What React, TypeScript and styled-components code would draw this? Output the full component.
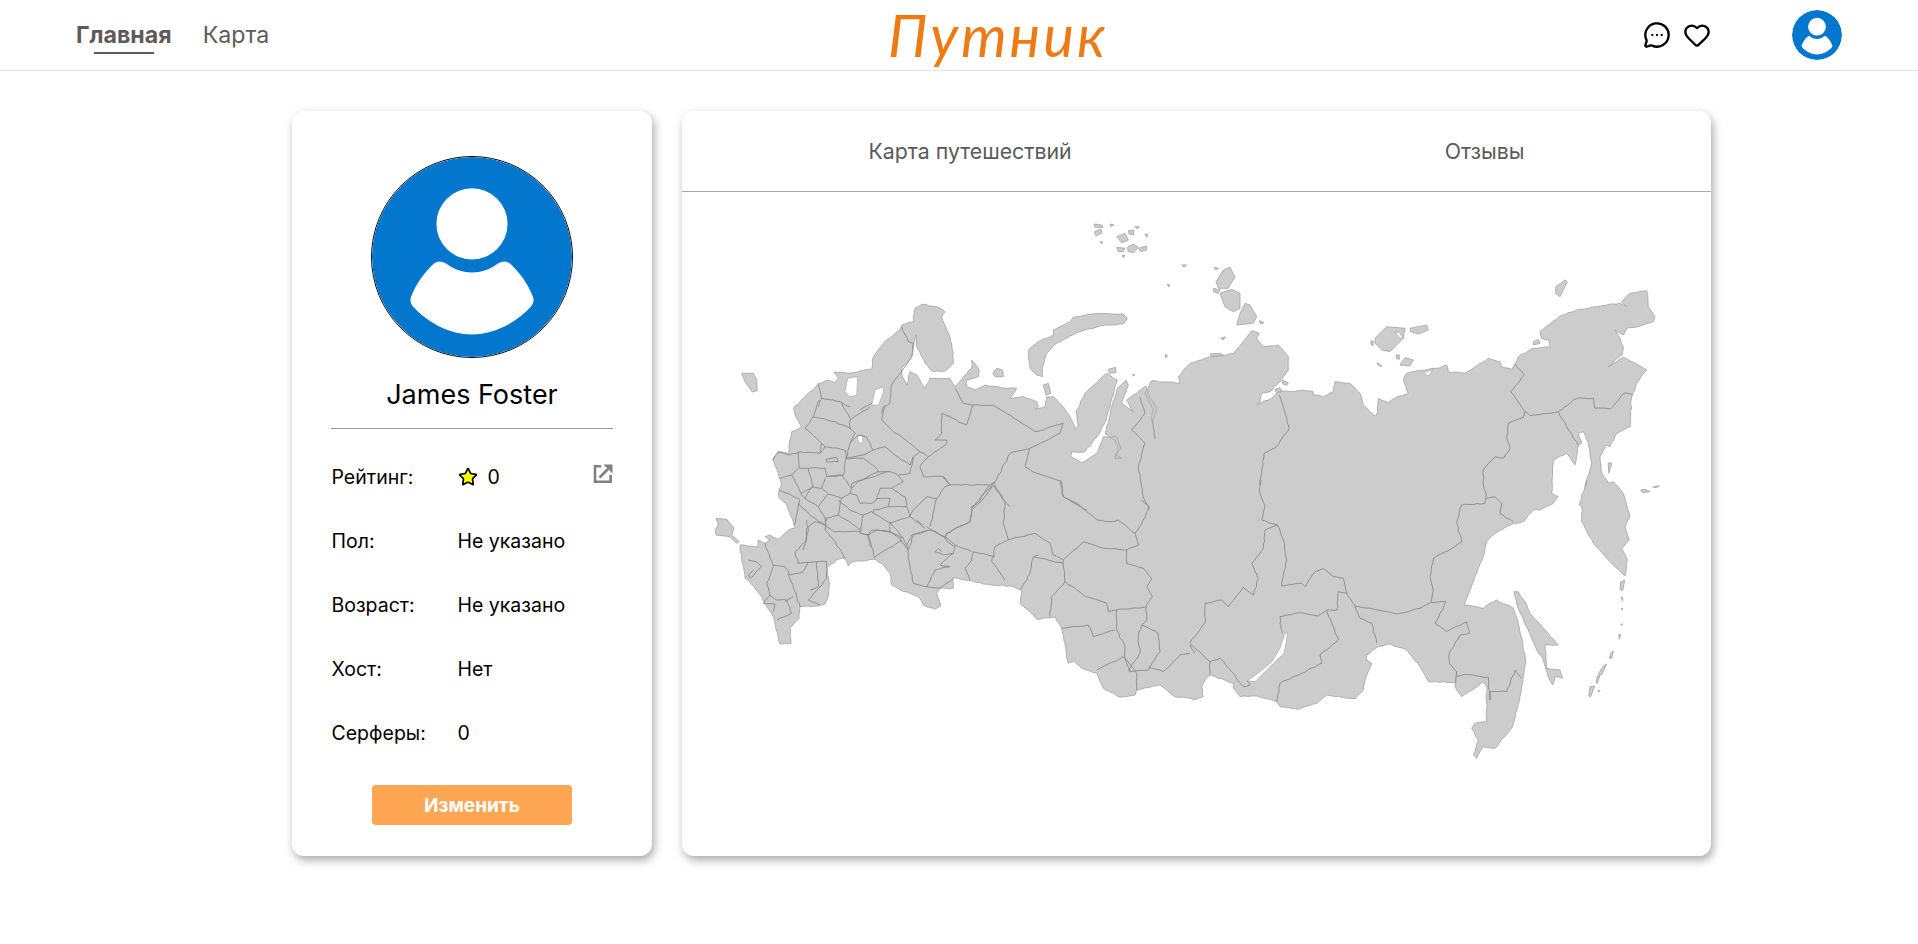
import React from 'react';
import styled, { createGlobalStyle } from 'styled-components';
import { Heart, MessageCircleMore, Star } from 'lucide-react';

// map data is traced in 3x crop coordinates, each helper maps one crop back to page pixels
const crop = (ox: number, oy: number) => (s: string) =>
  s
    .trim()
    .split(/\s+/)
    .map((p) => {
      const [x, y] = p.split(',').map(Number);
      return `${(ox + x / 3).toFixed(1)},${(oy + y / 3).toFixed(1)}`;
    })
    .join(' ');

const nw = crop(690, 210);
const sw = crop(690, 480);
const ne = crop(1190, 210);
const se = crop(1190, 480);
const eu = crop(770, 400);

// splits long segments and shakes the new points a little so the lines look like real borders
const roughen = (pts: string, amp: number, closed = false) => {
  const list = pts.split(' ').map((p) => p.split(',').map(Number));
  const out: string[] = [];
  let seed = 1;
  const noise = () => {
    seed += 1;
    const v = Math.sin(seed * 12.9898) * 43758.5453;
    return (v - Math.floor(v) - 0.5) * 2 * amp;
  };
  const count = closed ? list.length : list.length - 1;
  for (let i = 0; i < count; i++) {
    const [x1, y1] = list[i];
    const [x2, y2] = list[(i + 1) % list.length];
    const n = Math.max(1, Math.round(Math.hypot(x2 - x1, y2 - y1) / 4));
    out.push(`${x1},${y1}`);
    for (let k = 1; k < n; k++) {
      const t = k / n;
      out.push(`${(x1 + (x2 - x1) * t + noise()).toFixed(1)},${(y1 + (y2 - y1) * t + noise()).toFixed(1)}`);
    }
  }
  if (!closed) out.push(list[list.length - 1].join(','));
  return out.join(' ');
};

const mainland = roughen(
  [
    nw(`248,750 265,725 295,730 297,705 305,665 335,652 320,625 310,595 340,565 360,545 385,522 410,510 435,518 445,505 432,487
    475,490 545,478 550,440 580,400 630,360 635,345 670,335 675,295 695,283 740,290 765,305 755,320 780,380 790,430 790,460
    765,483 730,485 705,460 680,410 678,375 672,400 665,440 635,475 635,490 650,525 660,485 680,495 690,510 705,535 720,505
    780,505 795,530 820,500 845,475 845,450 868,480 865,500 830,510 830,530 855,540 885,525 950,535 980,535 960,565 1000,560
    1040,575 1045,590 1036,598 1065,590 1070,560 1090,560 1120,590 1150,640 1155,660 1165,645 1158,605 1185,550 1250,490
    1282,510 1265,565 1250,625 1225,675 1185,725 1145,725 1142,740 1175,758 1222,728 1240,680 1280,680 1292,715 1278,735
    1295,745 1275,745 1285,710 1275,690 1245,672 1262,600 1280,540 1308,510 1315,525 1295,580 1330,605 1310,570 1345,545
    1368,528 1375,555 1400,595 1388,640 1395,688 1385,620 1390,600 1365,550 1385,512 1470,520 1465,500 1480,480 1500,460`),
    ne(`60,440 100,435 130,430 155,400 185,362 208,370 200,385 220,410 265,405 295,440 295,480 270,515 240,545 215,550 210,575
    200,585 245,565 270,540 305,545 340,540 370,545 370,555 400,560 430,545 435,515 480,520 510,550 520,585 555,618 560,615
    565,565 595,578 620,560 655,550 640,510 650,490 725,475 740,475 770,465 775,485 825,490 895,445 930,455 935,470 965,478
    975,462 985,440 1030,415 1080,410 1075,390 1055,385 1050,365 1110,318 1160,300 1250,285 1290,280 1310,290 1295,275
    1320,250 1370,242 1375,290 1395,320 1390,335 1345,350 1310,355 1300,375 1275,360 1290,385 1300,410 1295,435 1255,470
    1300,442 1340,462 1370,480 1340,520 1325,560 1320,650 1280,670 1260,710 1250,705 1230,740 1235,790 1255,820 1270,815
    1300,850`),
    se(`1300,40 1320,110 1305,140 1318,180 1295,205 1312,240 1305,288 1260,245 1210,190 1175,125 1175,80 1168,75 1190,0`),
    ne(`1185,830 1205,760 1195,700 1180,665 1165,670 1175,700 1165,705 1155,765 1130,730 1090,750 1085,850`),
    se(`1105,50 1090,70 1050,90 1030,90 1000,125 960,135 915,160 890,185 880,230 855,290 822,375 860,380 880,385 900,370 920,360
    970,385 985,430 1008,545 990,650 965,745 915,805 880,800 860,835 850,825 865,780 845,745 855,730 890,725 890,620 880,605
    815,650 795,620 795,607 715,605 690,560 650,510 600,492 565,500 530,525 530,540 545,550 525,600 520,630 495,657 410,645
    380,670 325,688 270,680 260,665 200,648 150,650 130,625 130,610 60,585 45,600 35,620 40,650 15,660`),
    sw(`1500,655 1455,650 1410,615 1340,630 1335,645 1290,652 1240,625 1220,580 1180,567 1150,543 1135,550 1115,445 1095,410
    1040,418 1020,395 990,370 995,330 960,318 880,312 790,292 790,325 750,325 740,340 752,378 735,388 700,375 685,350 660,340
    630,330 605,315 600,280 580,255 555,238 490,245 475,258 465,235 440,240 412,262 418,310 415,350 405,372 385,378 330,380
    328,415 300,445 303,490 270,492 255,430 250,410 225,370 215,350 175,300 165,295 150,200 150,195 205,200 205,180 225,190
    240,180 225,170 240,165 265,178 295,150 315,145 308,120 290,75 268,55 265,40 275,15`),
    nw(`270,810 265,790`),
  ].join(' '),
  0.55,
  true,
);

const islands = [
  nw('155,490 190,490 200,510 202,542 187,546 165,515'),
  sw('78,115 110,118 132,145 125,165 148,185 140,190 120,170 78,165 75,150 85,135'),
  roughen(
    nw(`1015,420 1045,395 1090,375 1090,360 1140,335 1150,322 1225,310 1300,312 1312,325 1300,342 1230,348 1170,365 1100,400
    1070,430 1058,470 1058,500 1040,495 1020,475 1015,440`),
    0.5,
    true,
  ),
  nw('908,490 920,475 938,480 940,500 915,500'),
  nw('1060,525 1075,520 1082,550 1068,555'),
  nw('1255,478 1277,472 1278,488 1258,490'),
  nw('1213,42 1235,45 1240,52 1215,52'),
  nw('1213,65 1232,57 1236,68 1218,78'),
  nw('1280,80 1305,70 1315,90 1295,98'),
  nw('1312,112 1330,102 1345,112 1330,128 1315,125'),
  nw('1345,115 1370,108 1370,120 1352,125'),
  nw('1280,112 1305,115 1300,125 1285,125'),
  nw('1315,62 1332,60 1330,75 1318,72'),
  nw('1230,95 1238,95 1236,102'),
  nw('1260,42 1272,45 1262,50'),
  nw('1335,50 1348,50 1342,57'),
  nw('1365,72 1374,74 1370,82'),
  nw('1297,135 1305,136 1300,143'),
  nw('1475,165 1490,165 1482,171'),
  nw('1432,222 1440,226 1436,231'),
  nw('1427,432 1433,438 1426,444'),
  nw('1328,493 1335,495 1330,498'),
  ne('100,180 120,172 135,200 115,235 85,235 78,215'),
  ne('70,235 90,240 85,250 72,246'),
  ne('90,250 125,238 150,250 150,295 130,305 105,290'),
  ne('165,280 180,285 200,320 190,340 140,345 150,310'),
  ne('72,172 86,175 78,180'),
  ne('208,332 222,338 212,342'),
  ne('92,385 106,380 100,390'),
  ne('60,432 90,430 100,436 65,440'),
  ne('555,385 590,350 645,355 640,385 600,425 575,420 555,400'),
  ne('660,355 710,345 715,360 685,372 662,365'),
  ne('630,465 645,443 670,450 660,468'),
  ne('618,435 628,435 628,448 620,446'),
  ne('543,392 550,394 548,408 542,402'),
  ne('562,458 576,468 572,470 561,462'),
  ne('1097,230 1125,210 1132,215 1110,260 1097,250'),
  ne('1030,395 1045,388 1050,400 1030,405'),
  ne('277,510 295,518 290,526 278,522'),
  ne('255,538 270,533 275,545 258,547'),
  ne('1255,758 1266,760 1256,790'),
  roughen(
    se(`972,335 985,335 1010,375 1020,400 1105,495 1065,495 1070,565 1110,570 1118,595 1095,590 1088,615 1075,590 1060,540
    1040,510 1015,450 985,385`),
    0.5,
    true,
  ),
  se('1352,30 1365,28 1380,35 1358,38'),
  se('1390,20 1408,17 1405,21 1391,23'),
  se('1292,305 1304,300 1298,332 1290,328'),
  se('1293,352 1298,352 1298,362'),
  se('1294,385 1298,385 1296,390'),
  se('1292,432 1297,432 1295,437'),
  se('1286,465 1292,463 1288,478'),
  se('1262,520 1270,512 1265,536 1258,534'),
  se('1240,558 1250,552 1235,585 1225,582'),
  se('1222,588 1230,586 1222,610 1218,608'),
  se('1200,620 1214,618 1202,650 1196,648'),
  se('1224,630 1230,632 1226,636'),
];

const water = [
  nw('465,545 473,505 503,500 500,555 480,560'),
  nw('545,585 555,540 580,530 580,550 565,585'),
  eu('262,108 278,108 278,128 266,130'),
  ne('615,365 628,368 640,385 630,384'),
  ne('700,490 730,478 715,497'),
  se('293,455 288,490 282,520 248,552 215,585 195,605 172,602 210,575 245,545 270,505 283,465'),
];

const borders = [
  ne('975,462 1002,495 962,545 1005,605 1020,617 1105,605 1160,565 1210,565 1215,595 1262,597 1305,548 1327,553'),
  ne('1105,605 1130,650 1165,705'),
  ne('1005,605 1000,622 955,640 950,680 960,715 940,745 915,740 880,780 880,825 888,850 885,880 815,885'),
  se('815,75 800,130 815,185 775,212 730,235 720,290 730,330 722,368'),
  ne('888,865 915,860 935,880') + ' ' + se('935,70 930,100 970,125'),
  se(`722,368 690,385 620,402 590,395 495,378 470,340 460,295 430,290 400,265 375,275 345,320 335,310 275,318 290,240 280,180
    262,135 215,120 225,80 208,30 213,0`),
  ne('210,825 222,730 260,710 298,655 280,590 268,555'),
  se('722,368 768,365 735,430 770,455 830,425 838,460 810,465 778,520 778,550 800,575 797,610'),
  se('800,590 825,583 895,592 895,620 900,660 900,635 950,635 975,570 995,595'),
  se('495,378 510,415 545,430 560,490'),
  se('470,340 445,335 440,390 410,390 385,408 325,398 270,410 270,430 278,460'),
  se('410,390 445,480 390,525 395,550 270,610 260,665'),
  se(`262,135 225,150 220,205 185,250 205,295 190,345 160,322 115,380 95,360 45,370 45,430 0,490 60,545 90,535 125,575 160,620
    180,615 172,602`),
  se('60,545 60,585'),
  se('0,495 15,520'),
  nw('1350,560 1365,610 1325,660 1365,700 1345,770 1360,860 1378,900'),
  sw(`1355,60 1378,80 1355,130 1335,160 1345,195 1310,210 1310,250 1360,265 1385,295 1370,320 1387,350 1368,380 1370,420
    1355,435 1405,460 1410,515 1375,570 1320,575 1315,570 1350,520 1345,470 1355,435`),
  sw('1375,560 1420,575 1470,525 1500,520'),
  sw('1335,160 1285,120 1270,125 1220,120 1160,70 1120,50 1110,0'),
  nw('1020,715 1005,770 1040,790 1070,800 1115,815 1120,860 1190,900'),
  nw('1120,640 1035,665 910,585 850,585 820,580 795,535'),
  nw('1120,640 1110,670 1020,715 960,730 915,815 845,895'),
  sw('915,10 890,45 845,90 840,125 770,160 765,175'),
  nw(`850,585 830,645 755,610 755,670 735,690 770,690 770,700 715,740 690,770 700,800 760,800 780,825 900,825 915,815`),
  sw('915,15 945,65 940,130 955,180 1035,160 1080,190 1090,225 1120,240'),
  sw('955,180 915,200 905,245 945,300'),
  sw('915,230 850,215 845,240 825,265 840,300'),
  sw('795,195 845,215'),
  sw('1120,240 1125,305 1085,350 1080,410'),
  sw('1120,240 1180,185 1240,205 1310,210'),
  sw('1125,305 1190,350 1250,370 1255,395 1280,390 1370,380'),
  sw('1280,390 1280,450 1305,500 1303,530 1320,575'),
  sw('1115,445 1195,435 1210,470 1275,450'),
  sw('1220,570 1300,530 1340,580 1340,630'),
  sw('1045,225 1030,230 1020,280 990,330'),
  sw('1030,230 1120,250'),
  sw('765,170 720,150 665,165 650,195 660,260 670,310 710,320 735,270 780,260 750,255 790,220 795,195 765,170'),
  sw('790,220 760,225 735,215 745,205 755,215'),
  sw('710,320 750,325 790,295'),
  sw('650,195 640,175 600,155'),
  sw('410,115 405,150 435,185 465,235'),
  sw('515,160 535,165 555,235'),
  sw('535,165 545,150 600,155'),
  sw('555,230 635,180'),
  sw('600,125 640,175'),
  sw('350,145 375,125 405,135'),
  sw('350,145 350,180 315,215 325,250 380,245 410,245 410,295 355,360 390,375'),
  sw('380,245 385,320 360,330'),
  sw('225,190 250,260 230,310 240,345 220,370'),
  sw('250,255 285,260 300,285 340,275 355,245'),
  sw('295,280 320,350 330,380'),
  sw('240,345 260,360 290,360 305,400 260,420'),
  sw('220,370 255,372 250,395'),
  sw('285,365 310,350'),
  sw('175,240 200,245 215,260 180,295 175,285 190,270'),
  nw('385,590 395,565 385,520'),
  nw('395,565 450,575 480,590'),
  nw('510,600 545,580'),
  nw('605,525 600,580 580,590 575,610'),
  nw('635,350 655,395 670,400 665,440 605,525'),
  // central european part, traced from a closer crop
  eu('148,0 130,50 105,85 155,130 150,160'),
  eu('130,50 195,65 240,85 255,100'),
  eu('240,85 240,60 270,40 300,20'),
  eu('215,10 240,55'),
  eu('345,20 335,60 365,90 420,130 450,155 475,170'),
  eu('255,100 240,130 228,175 250,175 280,175 320,205 325,215 285,235 245,250'),
  eu('240,130 265,105 290,112 310,150 280,165 228,175'),
  eu('310,150 345,140 375,165 420,195 430,170 450,155'),
  eu('325,215 360,215 385,225 420,220 430,170'),
  eu('10,180 25,155 55,165 90,155 150,160 165,140 225,150 228,175 220,225 170,230 165,205 115,205 88,205 85,155'),
  eu('155,130 165,140'),
  eu('168,178 200,172 205,185 170,186 168,178'),
  eu('30,235 65,225 85,205'),
  eu('115,205 130,260 110,270 92,280 65,225'),
  eu('28,270 90,298'),
  eu('92,280 105,295 125,260 155,265 165,235'),
  eu('170,230 215,225 245,265 240,280 215,295 175,282 155,265'),
  eu('175,282 145,320 165,355 170,380 190,395 270,395'),
  eu('105,295 145,320'),
  eu('90,300 80,345 72,375'),
  eu('85,310 120,345 165,375'),
  eu('110,360 115,390 100,450'),
  eu('245,250 245,265 265,245 350,215'),
  eu('385,225 400,245 365,265 405,290 410,320 420,350 465,385'),
  eu('240,280 260,285 270,310 305,310 320,295 330,265 365,265'),
  eu('215,295 205,345 165,355'),
  eu('205,300 240,330 280,345 305,335 310,340 360,370 360,400'),
  eu('205,345 275,390'),
  eu('320,295 360,295 355,320 310,330 310,340'),
  eu('355,320 410,320'),
  eu('280,345 270,400 295,405 300,440'),
  eu('295,405 320,390 360,395 390,415 410,445'),
  eu('360,370 420,350'),
  eu('520,230 540,255 525,260 500,295 470,290 430,330 420,350'),
  eu('500,295 480,380'),
  eu('660,255 620,310 605,320 600,365 530,400 525,410'),
  eu('470,380 520,410 550,440'),
  eu('475,390 430,405 415,450'),
  eu('440,360 460,375'),
  eu('670,255 700,300 720,320'),
].map((pts) => roughen(pts, 0.6));

const rows = [
  { label: 'Пол:', value: 'Не указано' },
  { label: 'Возраст:', value: 'Не указано' },
  { label: 'Хост:', value: 'Нет' },
  { label: 'Серферы:', value: '0' },
];

const GlobalStyle = createGlobalStyle`
  html, body {
    margin: 0;
    padding: 0;
    background: #fff;
    font-family: Inter, 'Noto Sans', sans-serif;
  }
`;

const Page = styled.div`
  width: 1918px;
  height: 944px;
  overflow: hidden;
`;

const Header = styled.header`
  display: flex;
  align-items: center;
  height: 70px;
  padding: 0 76px;
  border-bottom: 1px solid #e6e6e6;
`;

const Nav = styled.nav`
  display: flex;
  gap: 31px;
  flex: 0 0 807px;
`;

const NavLink = styled.a<{ $active?: boolean }>`
  position: relative;
  font-size: 23.2px;
  line-height: 28px;
  color: #5f5a5a;
  font-weight: ${(p) => (p.$active ? 700 : 400)};

  ${(p) =>
    p.$active &&
    `&::after {
      content: '';
      position: absolute;
      left: 18px;
      width: 60px;
      bottom: -5px;
      height: 2px;
      background: #5f5a5a;
    }`}
`;

const Logo = styled.div`
  flex: 0 0 230px;
  text-align: center;
  font-family: Lato, 'Open Sans', sans-serif;
  font-style: italic;
  font-weight: 400;
  font-size: 58px;
  line-height: 70px;
  letter-spacing: 3px;
  color: #ee7a14;
`;

const Actions = styled.div`
  display: flex;
  align-items: center;
  margin-left: auto;
`;

const IconButton = styled.span`
  display: flex;
  width: 28px;
  height: 28px;
  align-items: center;
  justify-content: center;
  margin-left: 12px;
  color: #000;
`;

const AvatarSvg = styled.svg<{ $size: number; $outlined?: boolean }>`
  display: block;
  width: ${(p) => p.$size}px;
  height: ${(p) => p.$size}px;
  border-radius: 50%;
  box-sizing: border-box;
  border: ${(p) => (p.$outlined ? '1px solid #000' : 'none')};
`;

const HeaderAvatar = styled.div`
  margin-left: 81px;
`;

const Main = styled.main`
  display: flex;
  gap: 30px;
  padding: 40px 0 0 292px;
`;

const ProfileCard = styled.section`
  width: 360px;
  height: 745px;
  background: #fff;
  border-radius: 12px;
  box-shadow: 2px 4px 10px rgba(0, 0, 0, 0.35);
  padding-top: 45px;
  box-sizing: border-box;
`;

const AvatarWrap = styled.div`
  display: flex;
  justify-content: center;
`;

const Name = styled.h2`
  width: 282px;
  margin: 17px auto 0;
  padding-bottom: 13px;
  border-bottom: 1px solid #999;
  font-size: 27px;
  line-height: 40px;
  font-weight: 400;
  text-align: center;
  color: #000;
`;

const InfoList = styled.div`
  width: 281px;
  margin: 16px auto 0;
`;

const InfoRow = styled.div`
  display: flex;
  align-items: center;
  height: 64px;
  font-size: 19.5px;
  color: #000;
`;

const InfoLabel = styled.span`
  flex: 0 0 126px;
`;

const RatingValue = styled.span`
  display: flex;
  align-items: center;
  gap: 10px;
`;

const ShareLink = styled.svg`
  margin-left: auto;
  margin-bottom: 7px;
  width: 20px;
  height: 20px;
  color: #808080;
`;

const EditButton = styled.button`
  display: block;
  width: 200px;
  height: 40px;
  margin: 20px auto 0;
  border: none;
  border-radius: 4px;
  background: #ffa652;
  color: #fff;
  font-family: inherit;
  font-size: 19px;
  font-weight: 700;
  cursor: pointer;
`;

const MapPanel = styled.section`
  width: 1029px;
  height: 745px;
  background: #fff;
  border-radius: 12px;
  box-shadow: 2px 4px 10px rgba(0, 0, 0, 0.35);
  display: flex;
  flex-direction: column;
`;

const Tabs = styled.div`
  display: flex;
  justify-content: space-around;
  align-items: center;
  flex: 0 0 80px;
  border-bottom: 1px solid #aaa;
`;

const Tab = styled.a`
  font-size: 21.3px;
  color: #5a5a5a;
`;

const MapSvg = styled.svg`
  display: block;
  width: 1029px;
  height: 664px;
`;

const Land = styled.polygon`
  fill: #cccccc;
  stroke: #a3a3a3;
  stroke-width: 0.8;
  stroke-linejoin: round;
`;

const Water = styled.polygon`
  fill: #fff;
  stroke: #a3a3a3;
  stroke-width: 0.6;
`;

const Border = styled.polyline`
  fill: none;
  stroke: #8a8a8a;
  stroke-width: 0.9;
  stroke-linejoin: round;
`;

const Avatar: React.FC<{ size: number; outlined?: boolean }> = ({ size, outlined }) => (
  <AvatarSvg $size={size} $outlined={outlined} viewBox="0 0 100 100">
    <circle cx="50" cy="50" r="50" fill="#0277cd" />
    <circle cx="50" cy="33.4" r="17.8" fill="#fff" />
    <path
      fill="#fff"
      d="M19.3 70.5C22 63 27 57 31 53.3C33 51.8 35 52 37 53.3C41 56.3 45.5 57.8 50 57.8C54.5 57.8 59 56.3 63 53.3C65 52 67 51.8 69 53.3C73 57 78 63 80.7 70.5C81 72 80.5 73.5 79.5 74.8C72 83 61 88.8 50 88.8C39 88.8 28 83 20.5 74.8C19.5 73.5 19 72 19.3 70.5Z"
    />
  </AvatarSvg>
);

const App: React.FC = () => (
  <Page>
    <GlobalStyle />
    <Header>
      <Nav>
        <NavLink $active>Главная</NavLink>
        <NavLink>Карта</NavLink>
      </Nav>
      <Logo>Путник</Logo>
      <Actions>
        <IconButton>
          <MessageCircleMore size={28} strokeWidth={2} />
        </IconButton>
        <IconButton>
          <Heart size={28} strokeWidth={2} />
        </IconButton>
        <HeaderAvatar>
          <Avatar size={50} />
        </HeaderAvatar>
      </Actions>
    </Header>
    <Main>
      <ProfileCard>
        <AvatarWrap>
          <Avatar size={202} outlined />
        </AvatarWrap>
        <Name>James Foster</Name>
        <InfoList>
          <InfoRow>
            <InfoLabel>Рейтинг:</InfoLabel>
            <RatingValue>
              <Star size={20} fill="#ffff00" color="#000" strokeWidth={2} />0
            </RatingValue>
            <ShareLink viewBox="0 0 20 20">
              <path d="M8 2.2H2v15.6h15.6V11" fill="none" stroke="currentColor" strokeWidth="2.6" />
              <path d="M6.5 13.5L15 5" fill="none" stroke="currentColor" strokeWidth="2.6" />
              <path d="M10.5 0.5h9v9z" fill="currentColor" />
            </ShareLink>
          </InfoRow>
          {rows.map((r) => (
            <InfoRow key={r.label}>
              <InfoLabel>{r.label}</InfoLabel>
              <span>{r.value}</span>
            </InfoRow>
          ))}
        </InfoList>
        <EditButton>Изменить</EditButton>
      </ProfileCard>
      <MapPanel>
        <Tabs>
          <Tab>Карта путешествий</Tab>
          <Tab>Отзывы</Tab>
        </Tabs>
        <MapSvg viewBox="682 192 1029 664">
          <Land points={mainland} />
          {islands.map((pts, i) => (
            <Land key={i} points={pts} />
          ))}
          {water.map((pts, i) => (
            <Water key={i} points={pts} />
          ))}
          {borders.map((pts, i) => (
            <Border key={i} points={pts} />
          ))}
        </MapSvg>
      </MapPanel>
    </Main>
  </Page>
);

export default App;
